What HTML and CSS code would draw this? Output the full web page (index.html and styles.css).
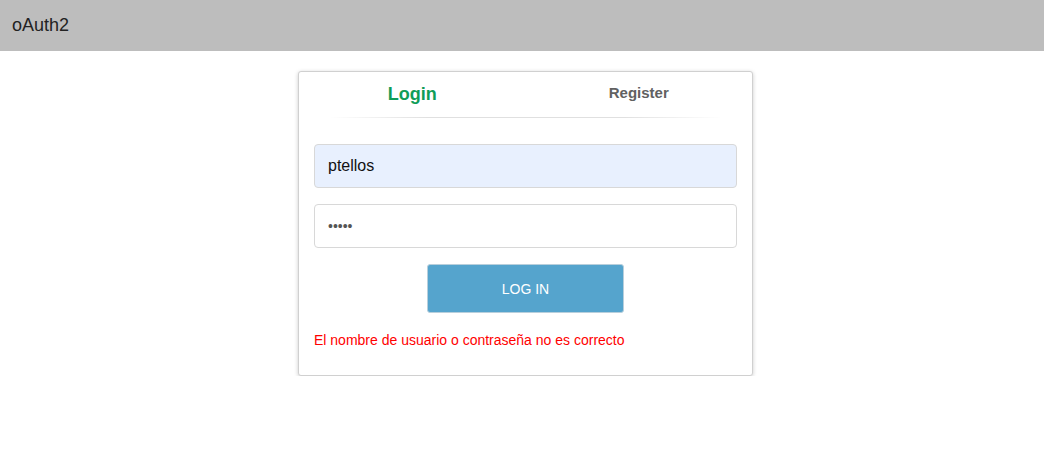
FILE: index.html
```html
<!DOCTYPE html>
<html>
<head>
<meta charset="utf-8">
<link rel="stylesheet" href="styles.css">
</head>
<body>
<header class="topbar"><span class="brand">oAuth2</span></header>
<main class="page">
  <div class="card">
    <div class="tabs">
      <div class="tab tab-active">Login</div>
      <div class="tab">Register</div>
    </div>
    <div class="divider"></div>
    <form class="form">
      <input class="field field-filled" type="text" value="ptellos">
      <input class="field" type="password" value="12345">
      <div class="actions"><button type="button" class="btn">LOG IN</button></div>
      <p class="error">El nombre de usuario o contraseña no es correcto</p>
    </form>
  </div>
</main>
</body>
</html>
```
FILE: styles.css
```css
* { box-sizing: border-box; }
body {
  margin: 0;
  font-family: "Liberation Sans", Arial, sans-serif;
  background: #fff;
}
.topbar {
  height: 51px;
  background: #bdbdbd;
  display: flex;
  align-items: center;
  padding-left: 12px;
}
.brand {
  font-size: 18px;
  color: #222;
}
.page {
  display: flex;
  justify-content: center;
  padding-top: 20px;
  padding-left: 7px;
}
.card {
  width: 455px;
  border: 1px solid #d0d0d0;
  border-radius: 3px;
  box-shadow: 0 1px 4px rgba(0,0,0,0.2);
  background: #fff;
}
.tabs {
  display: flex;
  height: 45px;
}
.tab {
  flex: 1;
  text-align: center;
  font-weight: bold;
  font-size: 15px;
  color: #616161;
  padding-top: 12px;
}
.tab-active {
  font-size: 18px;
  color: #0f9d58;
  padding-top: 12px;
}
.divider {
  height: 1px;
  margin: 0 30px;
  background: linear-gradient(to right, rgba(220,220,220,0), #e0e0e0 25%, #e0e0e0 75%, rgba(220,220,220,0));
}
.form {
  padding: 26px 15px 26px;
  display: flex;
  flex-direction: column;
  gap: 16px;
  margin: 0;
}
.field {
  height: 44px;
  width: 100%;
  border: 1px solid #d8d8d8;
  border-radius: 4px;
  padding: 0 13px;
  font-family: "Liberation Sans", Arial, sans-serif;
  font-size: 16px;
  color: #111;
  background: #fff;
  outline: none;
}
.field-filled {
  background: #e8f0fe;
}
.field[type="password"] {
  color: #555;
  font-size: 14px;
  letter-spacing: 0;
}
.actions {
  display: flex;
  justify-content: center;
}
.btn {
  width: 197px;
  height: 49px;
  background: #55a4cd;
  color: #fff;
  border: 1px solid #b8cfdc;
  border-radius: 3px;
  font-family: "Liberation Sans", Arial, sans-serif;
  font-size: 14px;
}
.error {
  margin: 2px 0 0;
  color: #ff0000;
  font-size: 14px;
  line-height: 18px;
}
```
